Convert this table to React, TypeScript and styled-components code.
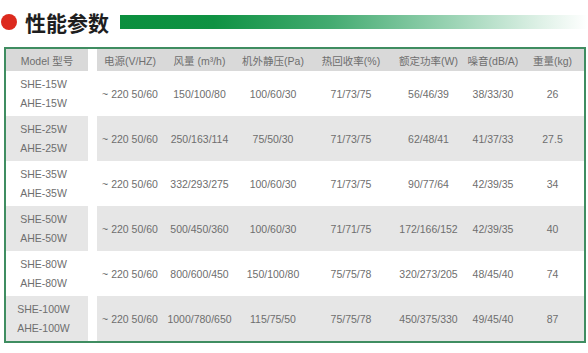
import styled, { createGlobalStyle } from 'styled-components';

const GlobalStyle = createGlobalStyle`
  body {
    margin: 0;
    background: #ffffff;
    font-family: "Liberation Sans", "Noto Sans CJK SC", sans-serif;
  }
`;

type Spec = {
  models: [string, string];
  values: string[];
};

const headers = ['电源(V/HZ)', '风量 (m³/h)', '机外静压(Pa)', '热回收率(%)', '额定功率(W)', '噪音(dB/A)', '重量(kg)'];

const rows: Spec[] = [
  { models: ['SHE-15W', 'AHE-15W'], values: ['~ 220 50/60', '150/100/80', '100/60/30', '71/73/75', '56/46/39', '38/33/30', '26'] },
  { models: ['SHE-25W', 'AHE-25W'], values: ['~ 220 50/60', '250/163/114', '75/50/30', '71/73/75', '62/48/41', '41/37/33', '27.5'] },
  { models: ['SHE-35W', 'AHE-35W'], values: ['~ 220 50/60', '332/293/275', '100/60/30', '71/73/75', '90/77/64', '42/39/35', '34'] },
  { models: ['SHE-50W', 'AHE-50W'], values: ['~ 220 50/60', '500/450/360', '100/60/30', '71/71/75', '172/166/152', '42/39/35', '40'] },
  { models: ['SHE-80W', 'AHE-80W'], values: ['~ 220 50/60', '800/600/450', '150/100/80', '75/75/78', '320/273/205', '48/45/40', '74'] },
  { models: ['SHE-100W', 'AHE-100W'], values: ['~ 220 50/60', '1000/780/650', '115/75/50', '75/75/78', '450/375/330', '49/45/40', '87'] },
];

const App = () => {
  return (
    <Page>
      <GlobalStyle />
      <TitleRow>
        <Dot />
        <Title>性能参数</Title>
        <Bar />
      </TitleRow>
      <Table>
        <Row $height={22}>
          <ModelCell $shade="#d9d9d9">Model 型号</ModelCell>
          <DataGrid $shade="#d9d9d9">
            {headers.map((h) => (
              <Cell key={h}>{h}</Cell>
            ))}
          </DataGrid>
        </Row>
        {rows.map((r, i) => {
          const shade = i % 2 === 1 ? '#e6e6e6' : '#ffffff';
          return (
            <Row key={r.models[0]} $height={45}>
              <ModelCell $shade={shade}>
                <ModelLine>{r.models[0]}</ModelLine>
                <ModelLine>{r.models[1]}</ModelLine>
              </ModelCell>
              <DataGrid $shade={shade}>
                {r.values.map((v, j) => (
                  <Cell key={j}>{v}</Cell>
                ))}
              </DataGrid>
            </Row>
          );
        })}
      </Table>
    </Page>
  );
};

const Page = styled.div`
  width: 588px;
  height: 353px;
  overflow: hidden;
`;

const TitleRow = styled.div`
  display: flex;
  align-items: center;
  height: 44px;
`;

const Dot = styled.div`
  width: 16px;
  height: 16px;
  margin-left: 1px;
  border-radius: 50%;
  background: #dc2a1e;
`;

const Title = styled.h1`
  margin: 0 0 0 8px;
  font-family: "Noto Sans CJK SC", sans-serif;
  font-size: 21px;
  font-weight: 700;
  line-height: 24px;
  color: #1e1e1e;
`;

const Bar = styled.div`
  flex: 1;
  height: 14px;
  margin-left: 11px;
  background: linear-gradient(
    to right,
    #0b8f3e 0%,
    #0f9243 20%,
    #44ab71 45%,
    #98d2b2 70%,
    #dff1e7 90%,
    #ffffff 100%
  );
`;

const Table = styled.div`
  box-sizing: border-box;
  width: 582px;
  margin: 3px 0 0 4px;
  border: 2px solid #3f8d61;
`;

const Row = styled.div<{ $height: number }>`
  display: flex;
  height: ${({ $height }) => $height}px;
`;

const ModelCell = styled.div<{ $shade: string }>`
  width: 82px;
  margin-right: 9px;
  display: flex;
  flex-direction: column;
  align-items: center;
  justify-content: center;
  background: ${({ $shade }) => $shade};
  font-size: 10.5px;
  color: #6e6e6e;
`;

const ModelLine = styled.div`
  line-height: 19px;
  padding-right: 7px;
`;

const DataGrid = styled.div<{ $shade: string }>`
  flex: 1;
  display: grid;
  grid-template-columns: 66px 73px 74px 82px 73px 56px 63px;
  align-items: center;
  background: ${({ $shade }) => $shade};
`;

const Cell = styled.div`
  text-align: center;
  font-size: 10.5px;
  color: #6e6e6e;
  white-space: nowrap;
`;

export default App;
